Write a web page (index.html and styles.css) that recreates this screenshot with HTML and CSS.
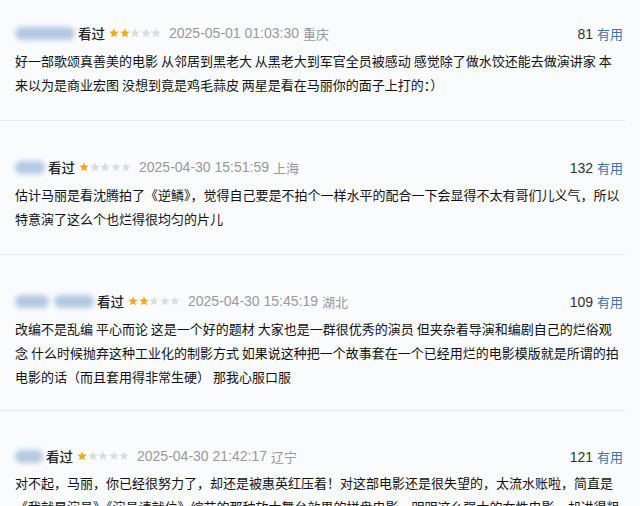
FILE: index.html
```html
<!DOCTYPE html>
<html lang="zh-CN">
<head>
  <meta charset="UTF-8">
  <title>短评</title>
  <link rel="stylesheet" href="styles.css">
</head>
<body>
  <div class="comments">

    <div class="comment">
      <div class="info">
        <span class="user"><span class="blur" style="width:60px"></span></span>
        <span class="seen">看过</span>
        <span class="stars s2">
          <svg viewBox="0 0 10 10"><polygon points="5,0.3 6.3,3.5 9.7,3.7 7.1,5.9 7.9,9.3 5,7.5 2.1,9.3 2.9,5.9 0.3,3.7 3.7,3.5"/></svg><svg viewBox="0 0 10 10"><polygon points="5,0.3 6.3,3.5 9.7,3.7 7.1,5.9 7.9,9.3 5,7.5 2.1,9.3 2.9,5.9 0.3,3.7 3.7,3.5"/></svg><svg viewBox="0 0 10 10"><polygon points="5,0.3 6.3,3.5 9.7,3.7 7.1,5.9 7.9,9.3 5,7.5 2.1,9.3 2.9,5.9 0.3,3.7 3.7,3.5"/></svg><svg viewBox="0 0 10 10"><polygon points="5,0.3 6.3,3.5 9.7,3.7 7.1,5.9 7.9,9.3 5,7.5 2.1,9.3 2.9,5.9 0.3,3.7 3.7,3.5"/></svg><svg viewBox="0 0 10 10"><polygon points="5,0.3 6.3,3.5 9.7,3.7 7.1,5.9 7.9,9.3 5,7.5 2.1,9.3 2.9,5.9 0.3,3.7 3.7,3.5"/></svg>
        </span>
        <span class="time">2025-05-01 01:03:30</span>
        <span class="place">重庆</span>
        <span class="votes"><span class="count">81</span> <a href="#">有用</a></span>
      </div>
      <p class="text">好一部歌颂真善美的电影 从邻居到黑老大 从黑老大到军官全员被感动 感觉除了做水饺还能去做演讲家 本来以为是商业宏图 没想到竟是鸡毛蒜皮 两星是看在马丽你的面子上打的：）</p>
    </div>

    <div class="comment">
      <div class="info">
        <span class="user"><span class="blur" style="width:30px"></span></span>
        <span class="seen">看过</span>
        <span class="stars s1">
          <svg viewBox="0 0 10 10"><polygon points="5,0.3 6.3,3.5 9.7,3.7 7.1,5.9 7.9,9.3 5,7.5 2.1,9.3 2.9,5.9 0.3,3.7 3.7,3.5"/></svg><svg viewBox="0 0 10 10"><polygon points="5,0.3 6.3,3.5 9.7,3.7 7.1,5.9 7.9,9.3 5,7.5 2.1,9.3 2.9,5.9 0.3,3.7 3.7,3.5"/></svg><svg viewBox="0 0 10 10"><polygon points="5,0.3 6.3,3.5 9.7,3.7 7.1,5.9 7.9,9.3 5,7.5 2.1,9.3 2.9,5.9 0.3,3.7 3.7,3.5"/></svg><svg viewBox="0 0 10 10"><polygon points="5,0.3 6.3,3.5 9.7,3.7 7.1,5.9 7.9,9.3 5,7.5 2.1,9.3 2.9,5.9 0.3,3.7 3.7,3.5"/></svg><svg viewBox="0 0 10 10"><polygon points="5,0.3 6.3,3.5 9.7,3.7 7.1,5.9 7.9,9.3 5,7.5 2.1,9.3 2.9,5.9 0.3,3.7 3.7,3.5"/></svg>
        </span>
        <span class="time">2025-04-30 15:51:59</span>
        <span class="place">上海</span>
        <span class="votes"><span class="count">132</span> <a href="#">有用</a></span>
      </div>
      <p class="text">估计马丽是看沈腾拍了《逆鳞》，觉得自己要是不拍个一样水平的配合一下会显得不太有哥们儿义气，所以特意演了这么个也烂得很均匀的片儿</p>
    </div>

    <div class="comment">
      <div class="info">
        <span class="user"><span class="blur" style="width:34px"></span><span class="blur" style="width:40px"></span></span>
        <span class="seen">看过</span>
        <span class="stars s2">
          <svg viewBox="0 0 10 10"><polygon points="5,0.3 6.3,3.5 9.7,3.7 7.1,5.9 7.9,9.3 5,7.5 2.1,9.3 2.9,5.9 0.3,3.7 3.7,3.5"/></svg><svg viewBox="0 0 10 10"><polygon points="5,0.3 6.3,3.5 9.7,3.7 7.1,5.9 7.9,9.3 5,7.5 2.1,9.3 2.9,5.9 0.3,3.7 3.7,3.5"/></svg><svg viewBox="0 0 10 10"><polygon points="5,0.3 6.3,3.5 9.7,3.7 7.1,5.9 7.9,9.3 5,7.5 2.1,9.3 2.9,5.9 0.3,3.7 3.7,3.5"/></svg><svg viewBox="0 0 10 10"><polygon points="5,0.3 6.3,3.5 9.7,3.7 7.1,5.9 7.9,9.3 5,7.5 2.1,9.3 2.9,5.9 0.3,3.7 3.7,3.5"/></svg><svg viewBox="0 0 10 10"><polygon points="5,0.3 6.3,3.5 9.7,3.7 7.1,5.9 7.9,9.3 5,7.5 2.1,9.3 2.9,5.9 0.3,3.7 3.7,3.5"/></svg>
        </span>
        <span class="time">2025-04-30 15:45:19</span>
        <span class="place">湖北</span>
        <span class="votes"><span class="count">109</span> <a href="#">有用</a></span>
      </div>
      <p class="text">改编不是乱编 平心而论 这是一个好的题材 大家也是一群很优秀的演员 但夹杂着导演和编剧自己的烂俗观念 什么时候抛弃这种工业化的制影方式 如果说这种把一个故事套在一个已经用烂的电影模版就是所谓的拍电影的话（而且套用得非常生硬） 那我心服口服</p>
    </div>

    <div class="comment">
      <div class="info">
        <span class="user"><span class="blur" style="width:28px"></span></span>
        <span class="seen">看过</span>
        <span class="stars s1">
          <svg viewBox="0 0 10 10"><polygon points="5,0.3 6.3,3.5 9.7,3.7 7.1,5.9 7.9,9.3 5,7.5 2.1,9.3 2.9,5.9 0.3,3.7 3.7,3.5"/></svg><svg viewBox="0 0 10 10"><polygon points="5,0.3 6.3,3.5 9.7,3.7 7.1,5.9 7.9,9.3 5,7.5 2.1,9.3 2.9,5.9 0.3,3.7 3.7,3.5"/></svg><svg viewBox="0 0 10 10"><polygon points="5,0.3 6.3,3.5 9.7,3.7 7.1,5.9 7.9,9.3 5,7.5 2.1,9.3 2.9,5.9 0.3,3.7 3.7,3.5"/></svg><svg viewBox="0 0 10 10"><polygon points="5,0.3 6.3,3.5 9.7,3.7 7.1,5.9 7.9,9.3 5,7.5 2.1,9.3 2.9,5.9 0.3,3.7 3.7,3.5"/></svg><svg viewBox="0 0 10 10"><polygon points="5,0.3 6.3,3.5 9.7,3.7 7.1,5.9 7.9,9.3 5,7.5 2.1,9.3 2.9,5.9 0.3,3.7 3.7,3.5"/></svg>
        </span>
        <span class="time">2025-04-30 21:42:17</span>
        <span class="place">辽宁</span>
        <span class="votes"><span class="count">121</span> <a href="#">有用</a></span>
      </div>
      <p class="text">对不起，马丽，你已经很努力了，却还是被惠英红压着！对这部电影还是很失望的，太流水账啦，简直是《我就是演员》《演员请就位》综艺的那种放大舞台效果的拼盘电影，明明这么强大的女性电影，却讲得粗糙又散乱。</p>
    </div>

  </div>
</body>
</html>
```

FILE: styles.css
```css
* {
  box-sizing: border-box;
}

html,
body {
  margin: 0;
  background: #f9fbfd;
}

body {
  font-family: "Liberation Sans", "Noto Sans CJK SC", sans-serif;
  color: #222;
  overflow: hidden;
}

.comments {
  width: 625px;
}

.comment {
  padding: 36px 2px 23px 15px;
  border-bottom: 1px solid #e6e9ee;
}

.comment:first-child {
  padding-top: 23px;
}

.comment:nth-child(3) {
  padding-bottom: 21px;
}

.comment:last-child {
  padding-top: 35px;
}

.info {
  display: flex;
  align-items: center;
  height: 20px;
  font-size: 13px;
  white-space: nowrap;
}

.user {
  display: flex;
  gap: 5px;
  margin-right: 3px;
}

.blur {
  display: block;
  height: 13px;
  border-radius: 7px;
  background: #b3c9e2;
  filter: blur(2.5px);
}

.seen {
  font-family: "Noto Sans CJK SC", sans-serif;
  font-size: 13.5px;
  font-weight: 500;
  color: #222;
  margin-right: 4px;
}

.stars {
  display: flex;
  gap: 0.5px;
  margin-right: 8px;
}

.stars svg {
  width: 10px;
  height: 10px;
  fill: #dcdcdc;
}

.s1 svg:nth-child(-n+1),
.s2 svg:nth-child(-n+2) {
  fill: #f0a81c;
}

.time {
  font-size: 14px;
  color: #999;
  margin-right: 4px;
}

.place {
  font-family: "Noto Sans CJK SC", sans-serif;
  color: #999;
}

.votes {
  margin-left: auto;
  font-size: 14px;
  color: #333;
}

.votes a {
  font-family: "Noto Sans CJK SC", sans-serif;
  font-size: 13px;
  color: #3f74a8;
  text-decoration: none;
}

.text {
  margin: 6px 0 0;
  font-family: "Noto Sans CJK SC", sans-serif;
  font-size: 13px;
  line-height: 24px;
  color: #111;
}

.comment:last-child .text {
  margin-top: 5px;
}
```
